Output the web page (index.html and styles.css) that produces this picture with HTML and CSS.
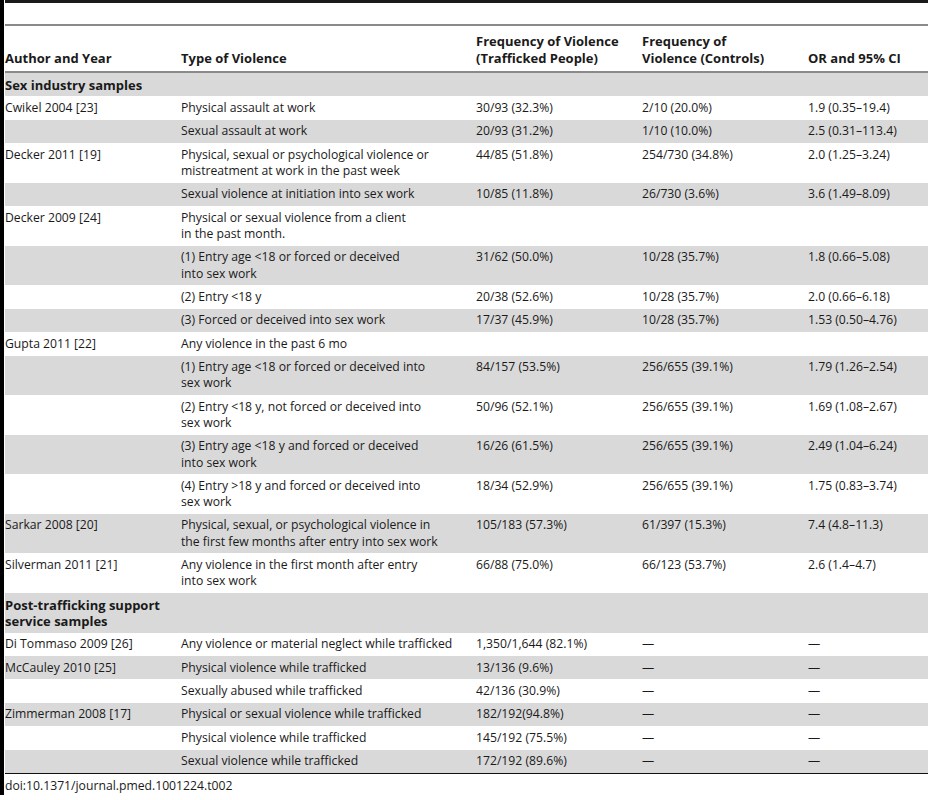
FILE: index.html
```html
<!DOCTYPE html>
<html lang="en">
<head>
    <meta charset="UTF-8">
    <title>Table 2. Violence among trafficked people</title>
    <link rel="stylesheet" href="styles.css">
</head>
<body>

<div class="page">
    <div class="top-rule"></div>
    <div class="sub-rule"></div>

    <table class="data-table">
        <colgroup>
            <col class="c-author">
            <col class="c-type">
            <col class="c-freq">
            <col class="c-ctrl">
            <col class="c-or">
        </colgroup>
        <thead>
            <tr>
                <th>Author and Year</th>
                <th>Type of Violence</th>
                <th>Frequency of Violence<br>(Trafficked People)</th>
                <th>Frequency of<br>Violence (Controls)</th>
                <th>OR and 95% CI</th>
            </tr>
        </thead>
        <tbody>
            <tr class="shade section">
                <td colspan="5">Sex industry samples</td>
            </tr>
            <tr>
                <td>Cwikel 2004 [23]</td>
                <td>Physical assault at work</td>
                <td>30/93 (32.3%)</td>
                <td>2/10 (20.0%)</td>
                <td>1.9 (0.35–19.4)</td>
            </tr>
            <tr class="shade">
                <td></td>
                <td>Sexual assault at work</td>
                <td>20/93 (31.2%)</td>
                <td>1/10 (10.0%)</td>
                <td>2.5 (0.31–113.4)</td>
            </tr>
            <tr>
                <td>Decker 2011 [19]</td>
                <td>Physical, sexual or psychological violence or<br>mistreatment at work in the past week</td>
                <td>44/85 (51.8%)</td>
                <td>254/730 (34.8%)</td>
                <td>2.0 (1.25–3.24)</td>
            </tr>
            <tr class="shade">
                <td></td>
                <td>Sexual violence at initiation into sex work</td>
                <td>10/85 (11.8%)</td>
                <td>26/730 (3.6%)</td>
                <td>3.6 (1.49–8.09)</td>
            </tr>
            <tr>
                <td>Decker 2009 [24]</td>
                <td>Physical or sexual violence from a client<br>in the past month.</td>
                <td></td>
                <td></td>
                <td></td>
            </tr>
            <tr class="shade">
                <td></td>
                <td>(1) Entry age &lt;18 or forced or deceived<br>into sex work</td>
                <td>31/62 (50.0%)</td>
                <td>10/28 (35.7%)</td>
                <td>1.8 (0.66–5.08)</td>
            </tr>
            <tr>
                <td></td>
                <td>(2) Entry &lt;18 y</td>
                <td>20/38 (52.6%)</td>
                <td>10/28 (35.7%)</td>
                <td>2.0 (0.66–6.18)</td>
            </tr>
            <tr class="shade">
                <td></td>
                <td>(3) Forced or deceived into sex work</td>
                <td>17/37 (45.9%)</td>
                <td>10/28 (35.7%)</td>
                <td>1.53 (0.50–4.76)</td>
            </tr>
            <tr>
                <td>Gupta 2011 [22]</td>
                <td>Any violence in the past 6 mo</td>
                <td></td>
                <td></td>
                <td></td>
            </tr>
            <tr class="shade">
                <td></td>
                <td>(1) Entry age &lt;18 or forced or deceived into<br>sex work</td>
                <td>84/157 (53.5%)</td>
                <td>256/655 (39.1%)</td>
                <td>1.79 (1.26–2.54)</td>
            </tr>
            <tr>
                <td></td>
                <td>(2) Entry &lt;18 y, not forced or deceived into<br>sex work</td>
                <td>50/96 (52.1%)</td>
                <td>256/655 (39.1%)</td>
                <td>1.69 (1.08–2.67)</td>
            </tr>
            <tr class="shade">
                <td></td>
                <td>(3) Entry age &lt;18 y and forced or deceived<br>into sex work</td>
                <td>16/26 (61.5%)</td>
                <td>256/655 (39.1%)</td>
                <td>2.49 (1.04–6.24)</td>
            </tr>
            <tr>
                <td></td>
                <td>(4) Entry &gt;18 y and forced or deceived into<br>sex work</td>
                <td>18/34 (52.9%)</td>
                <td>256/655 (39.1%)</td>
                <td>1.75 (0.83–3.74)</td>
            </tr>
            <tr class="shade">
                <td>Sarkar 2008 [20]</td>
                <td>Physical, sexual, or psychological violence in<br>the first few months after entry into sex work</td>
                <td>105/183 (57.3%)</td>
                <td>61/397 (15.3%)</td>
                <td>7.4 (4.8–11.3)</td>
            </tr>
            <tr>
                <td>Silverman 2011 [21]</td>
                <td>Any violence in the first month after entry<br>into sex work</td>
                <td>66/88 (75.0%)</td>
                <td>66/123 (53.7%)</td>
                <td>2.6 (1.4–4.7)</td>
            </tr>
            <tr class="shade section">
                <td>Post-trafficking support<br>service samples</td>
                <td></td>
                <td></td>
                <td></td>
                <td></td>
            </tr>
            <tr>
                <td>Di Tommaso 2009 [26]</td>
                <td>Any violence or material neglect while trafficked</td>
                <td>1,350/1,644 (82.1%)</td>
                <td>—</td>
                <td>—</td>
            </tr>
            <tr class="shade">
                <td>McCauley 2010 [25]</td>
                <td>Physical violence while trafficked</td>
                <td>13/136 (9.6%)</td>
                <td>—</td>
                <td>—</td>
            </tr>
            <tr>
                <td></td>
                <td>Sexually abused while trafficked</td>
                <td>42/136 (30.9%)</td>
                <td>—</td>
                <td>—</td>
            </tr>
            <tr class="shade">
                <td>Zimmerman 2008 [17]</td>
                <td>Physical or sexual violence while trafficked</td>
                <td>182/192(94.8%)</td>
                <td>—</td>
                <td>—</td>
            </tr>
            <tr>
                <td></td>
                <td>Physical violence while trafficked</td>
                <td>145/192 (75.5%)</td>
                <td>—</td>
                <td>—</td>
            </tr>
            <tr class="shade">
                <td></td>
                <td>Sexual violence while trafficked</td>
                <td>172/192 (89.6%)</td>
                <td>—</td>
                <td>—</td>
            </tr>
        </tbody>
    </table>

    <p class="doi">doi:10.1371/journal.pmed.1001224.t002</p>
</div>

</body>
</html>
```

FILE: styles.css
```css
body {
    margin: 0;
    background-color: #fff;
    font-family: "Open Sans", sans-serif;
    font-size: 12.2px;
    color: #1a1a1a;
}

.page {
    border-left: 4px solid #000;
    padding-left: 1px;
    height: 795px;
}

.top-rule {
    height: 3px;
    background-color: #1a1a1a;
}

.sub-rule {
    height: 2px;
    margin-top: 21px;
    background-color: #8a8a8a;
}

.data-table {
    width: 100%;
    border-collapse: collapse;
    table-layout: fixed;
    border-bottom: 1.5px solid #111;
}

.c-author { width: 176px; }
.c-type { width: 295px; }
.c-freq { width: 166px; }
.c-ctrl { width: 166px; }

th {
    text-align: left;
    vertical-align: bottom;
    font-size: 13px;
    font-weight: bold;
    line-height: 17px;
    padding: 7px 0 4px 0;
    border-bottom: 2px solid #8a8a8a;
}

td {
    text-align: left;
    vertical-align: top;
    line-height: 16.2px;
    padding: 3.6px 0;
}

.shade td {
    background-color: #d9d9d9;
}

.section td {
    font-size: 13px;
    font-weight: bold;
}

.doi {
    margin: 4px 0 0 0;
    line-height: 16px;
}
```
